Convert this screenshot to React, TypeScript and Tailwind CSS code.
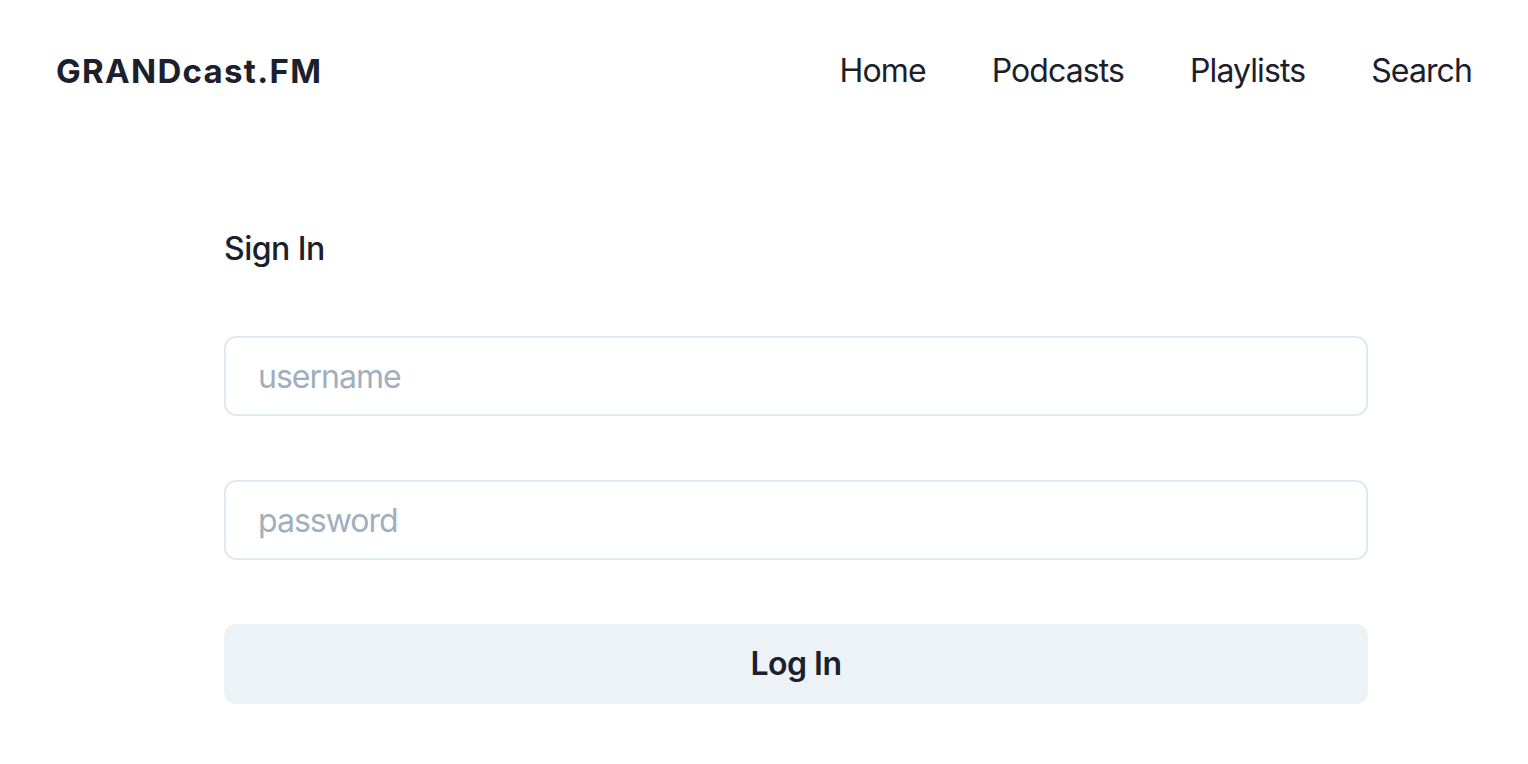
import React from "react";

export default function App() {
  return (
    <div
      className="min-h-screen w-full bg-white text-[#1A202C]"
      style={{ fontFamily: "Inter, 'Noto Sans', sans-serif" }}
    >
      <header className="flex h-[142px] items-center justify-between px-14">
        <div className="text-[33px] font-bold leading-[48px] tracking-[1.3px]">GRANDcast.FM</div>
        <nav className="flex items-center gap-[66px] text-[32px] leading-[48px] tracking-[-0.9px]">
          <a>Home</a>
          <a>Podcasts</a>
          <a>Playlists</a>
          <a>Search</a>
        </nav>
      </header>
      <main className="ml-[224px] w-[1144px] pt-[83px]">
        <h2 className="text-[32px] font-medium leading-[48px] tracking-[-0.5px]">Sign In</h2>
        <div className="mt-[63px] flex flex-col gap-16">
          <input
            placeholder="username"
            className="h-20 w-full rounded-xl border-2 border-[#E2E8F0] bg-white px-8 text-[32px] tracking-[-1px] outline-none placeholder:text-[#A0AEC0]"
          />
          <input
            placeholder="password"
            type="password"
            className="h-20 w-full rounded-xl border-2 border-[#E2E8F0] bg-white px-8 text-[32px] tracking-[-1px] outline-none placeholder:text-[#A0AEC0]"
          />
          <button className="h-20 w-full rounded-xl bg-[#EDF2F7] text-[32px] font-semibold tracking-[-0.5px]">
            Log In
          </button>
        </div>
      </main>
    </div>
  );
}
